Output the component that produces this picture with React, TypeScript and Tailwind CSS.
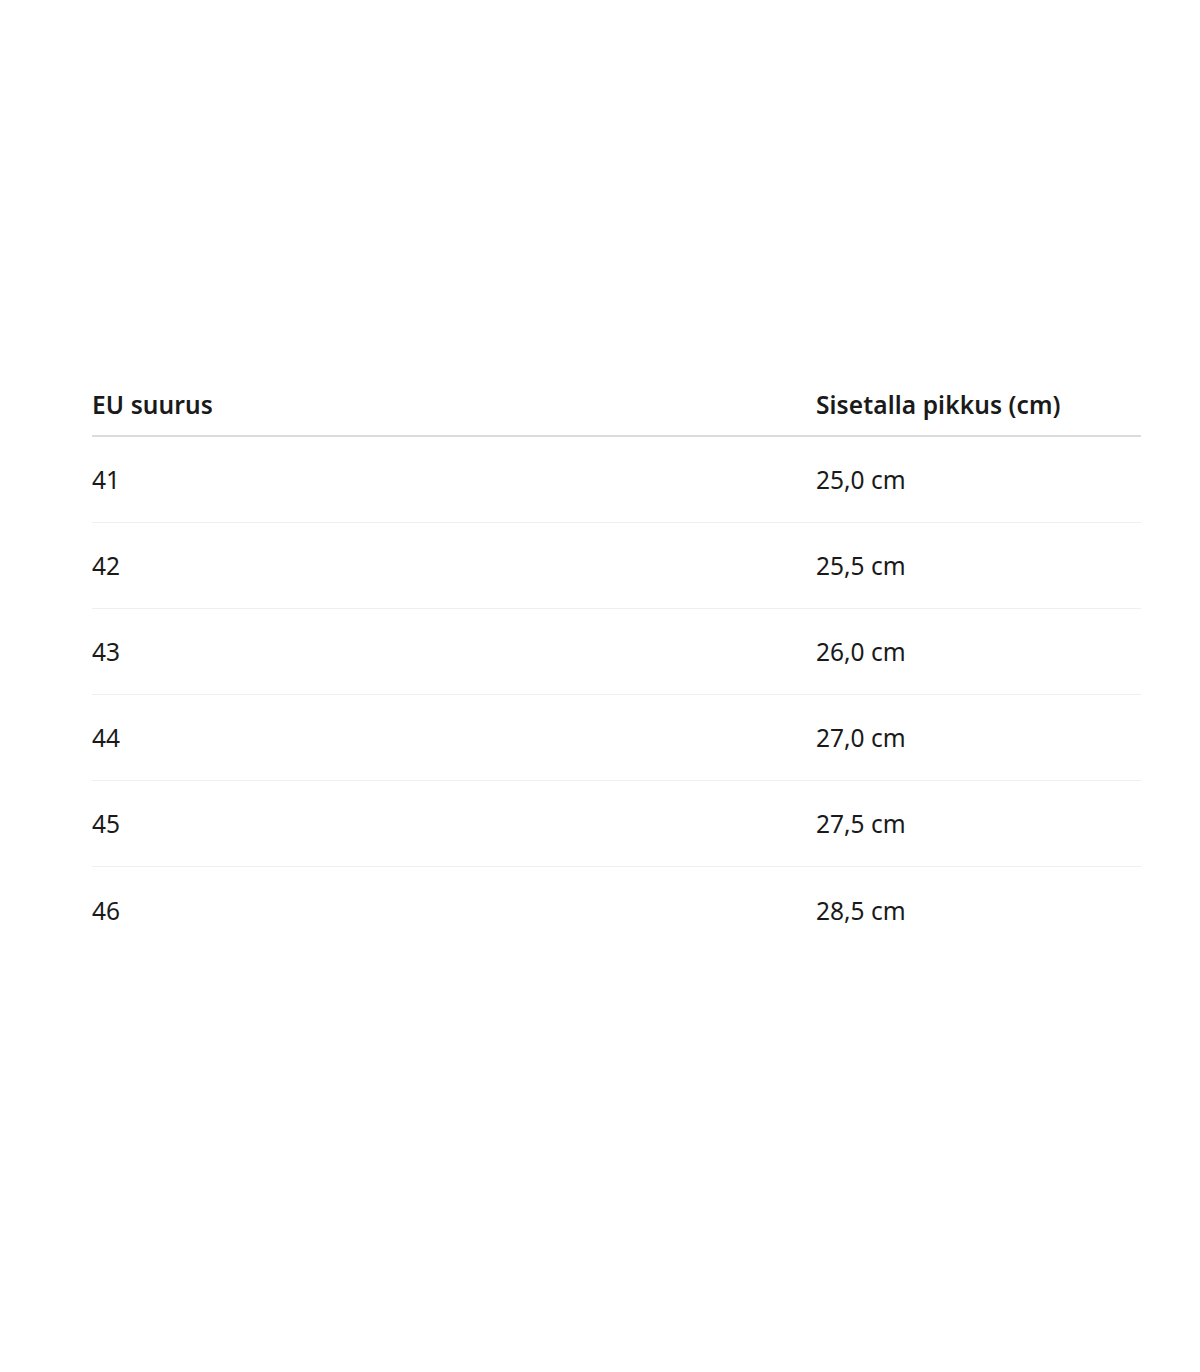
const rows = [
  ['41', '25,0 cm'],
  ['42', '25,5 cm'],
  ['43', '26,0 cm'],
  ['44', '27,0 cm'],
  ['45', '27,5 cm'],
  ['46', '28,5 cm'],
]

export default function App() {
  return (
    <div className="min-h-[1372px] w-full bg-white font-['Noto_Sans',sans-serif] text-[#1a1a1a]">
      <div className="ml-[92px] w-[1049px] pt-[374px]">
        <div className="grid h-[63px] grid-cols-[724px_1fr] items-center border-b-2 border-[#dcdcdc] pt-[2px] text-[24.5px] font-semibold tracking-[0.1px]">
          <div>EU suurus</div>
          <div>Sisetalla pikkus (cm)</div>
        </div>
        {rows.map(([size, len], i) => (
          <div
            key={size}
            className={
              i < rows.length - 1
                ? 'grid h-[86px] grid-cols-[724px_1fr] items-center border-b border-[#efefef] pt-[2px] text-[24.5px]'
                : 'grid h-[86px] grid-cols-[724px_1fr] items-center pt-[2px] text-[24.5px]'
            }
          >
            <div>{size}</div>
            <div>{len}</div>
          </div>
        ))}
      </div>
    </div>
  )
}
